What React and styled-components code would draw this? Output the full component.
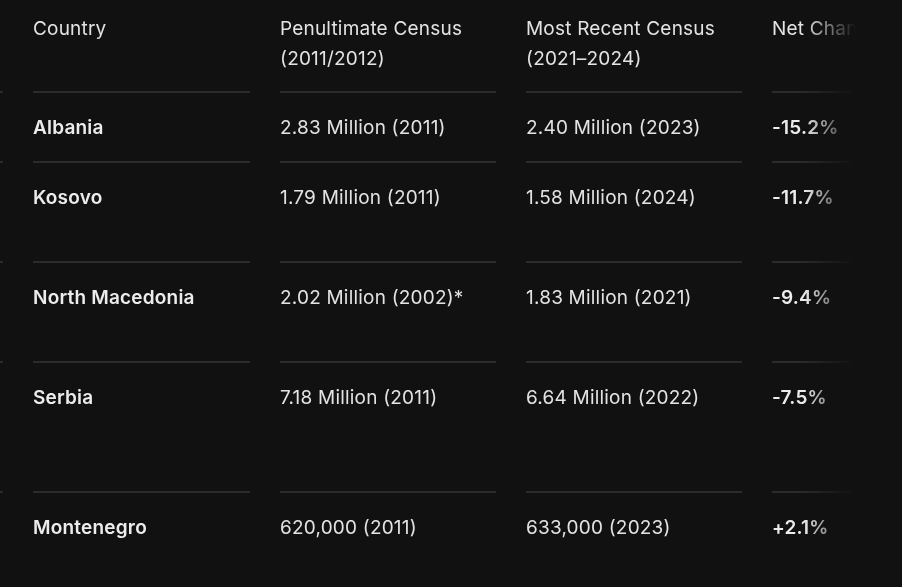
import React from 'react'
import styled, { createGlobalStyle } from 'styled-components'

const GlobalStyle = createGlobalStyle`
    html, body {
        margin: 0;
        padding: 0;
        background: #111111;
        overflow: hidden;
    }
    body {
        font-family: 'Inter', 'Roboto', sans-serif;
        color: #e3e3e3;
    }
`

// census data, the table is scrolled so the first (index) column is cut off at the left
const headers = [
    ['Country'],
    ['Penultimate Census', '(2011/2012)'],
    ['Most Recent Census', '(2021–2024)'],
    ['Net Change'],
]

const rows = [
    { country: 'Albania', prev: '2.83 Million (2011)', recent: '2.40 Million (2023)', change: '-15.2%', height: 70 },
    { country: 'Kosovo', prev: '1.79 Million (2011)', recent: '1.58 Million (2024)', change: '-11.7%', height: 100 },
    { country: 'North Macedonia', prev: '2.02 Million (2002)*', recent: '1.83 Million (2021)', change: '-9.4%', height: 100 },
    { country: 'Serbia', prev: '7.18 Million (2011)', recent: '6.64 Million (2022)', change: '-7.5%', height: 130 },
    { country: 'Montenegro', prev: '620,000 (2011)', recent: '633,000 (2023)', change: '+2.1%', height: 94, last: true },
]

const App = () => {
    return (
        <Page>
            <GlobalStyle />
            <Scroller>
                <Table>
                    <colgroup>
                        <col style={{ width: 3 }} />
                        <col style={{ width: 217 }} />
                        <col style={{ width: 216 }} />
                        <col style={{ width: 216 }} />
                        <col style={{ width: 216 }} />
                    </colgroup>
                    <thead>
                        <HeadRow>
                            <Spacer />
                            {headers.map((h, i) => (
                                <HeadCell key={i}>
                                    {h.map((line, j) => <Line key={j}>{line}</Line>)}
                                </HeadCell>
                            ))}
                        </HeadRow>
                    </thead>
                    <tbody>
                        {rows.map((r) => (
                            <BodyRow key={r.country} $height={r.height}>
                                <Spacer $last={r.last} />
                                <Cell $last={r.last} $strong>{r.country}</Cell>
                                <Cell $last={r.last}>{r.prev}</Cell>
                                <Cell $last={r.last}>{r.recent}</Cell>
                                <Cell $last={r.last} $strong>{r.change}</Cell>
                            </BodyRow>
                        ))}
                    </tbody>
                </Table>
            </Scroller>
        </Page>
    )
}

export default App

const Page = styled.div`
    width: 902px;
    height: 587px;
    padding-right: 46px;
    box-sizing: border-box;
`

const Scroller = styled.div`
    width: 856px;
    height: 100%;
    overflow: hidden;
    mask-image: linear-gradient(to right, #000 calc(100% - 52px), transparent 100%);
    -webkit-mask-image: linear-gradient(to right, #000 calc(100% - 52px), transparent 100%);
`

const Table = styled.table`
    border-collapse: separate;
    border-spacing: 30px 0;
    margin-left: -30px;
    table-layout: fixed;
    width: 1018px;
    font-size: 19px;
    letter-spacing: 0.2px;
    line-height: 30px;
`

const HeadRow = styled.tr`
    height: 93px;
`

const BodyRow = styled.tr`
    height: ${(p) => p.$height}px;
`

const Spacer = styled.td`
    padding: 0;
    border-bottom: ${(p) => (p.$last ? 'none' : '2px solid #2b2b2b')};
`

const HeadCell = styled.th`
    padding: 14px 0 0 0;
    vertical-align: top;
    text-align: left;
    font-weight: 400;
    color: #e3e3e3;
    white-space: nowrap;
    overflow: hidden;
    border-bottom: 2px solid #2b2b2b;
`

const Line = styled.div`
    display: block;
`

const Cell = styled.td`
    padding: 20px 0 0 0;
    vertical-align: top;
    white-space: nowrap;
    font-weight: ${(p) => (p.$strong ? 600 : 400)};
    color: ${(p) => (p.$strong ? '#ececec' : '#e3e3e3')};
    border-bottom: ${(p) => (p.$last ? 'none' : '2px solid #2b2b2b')};
`
